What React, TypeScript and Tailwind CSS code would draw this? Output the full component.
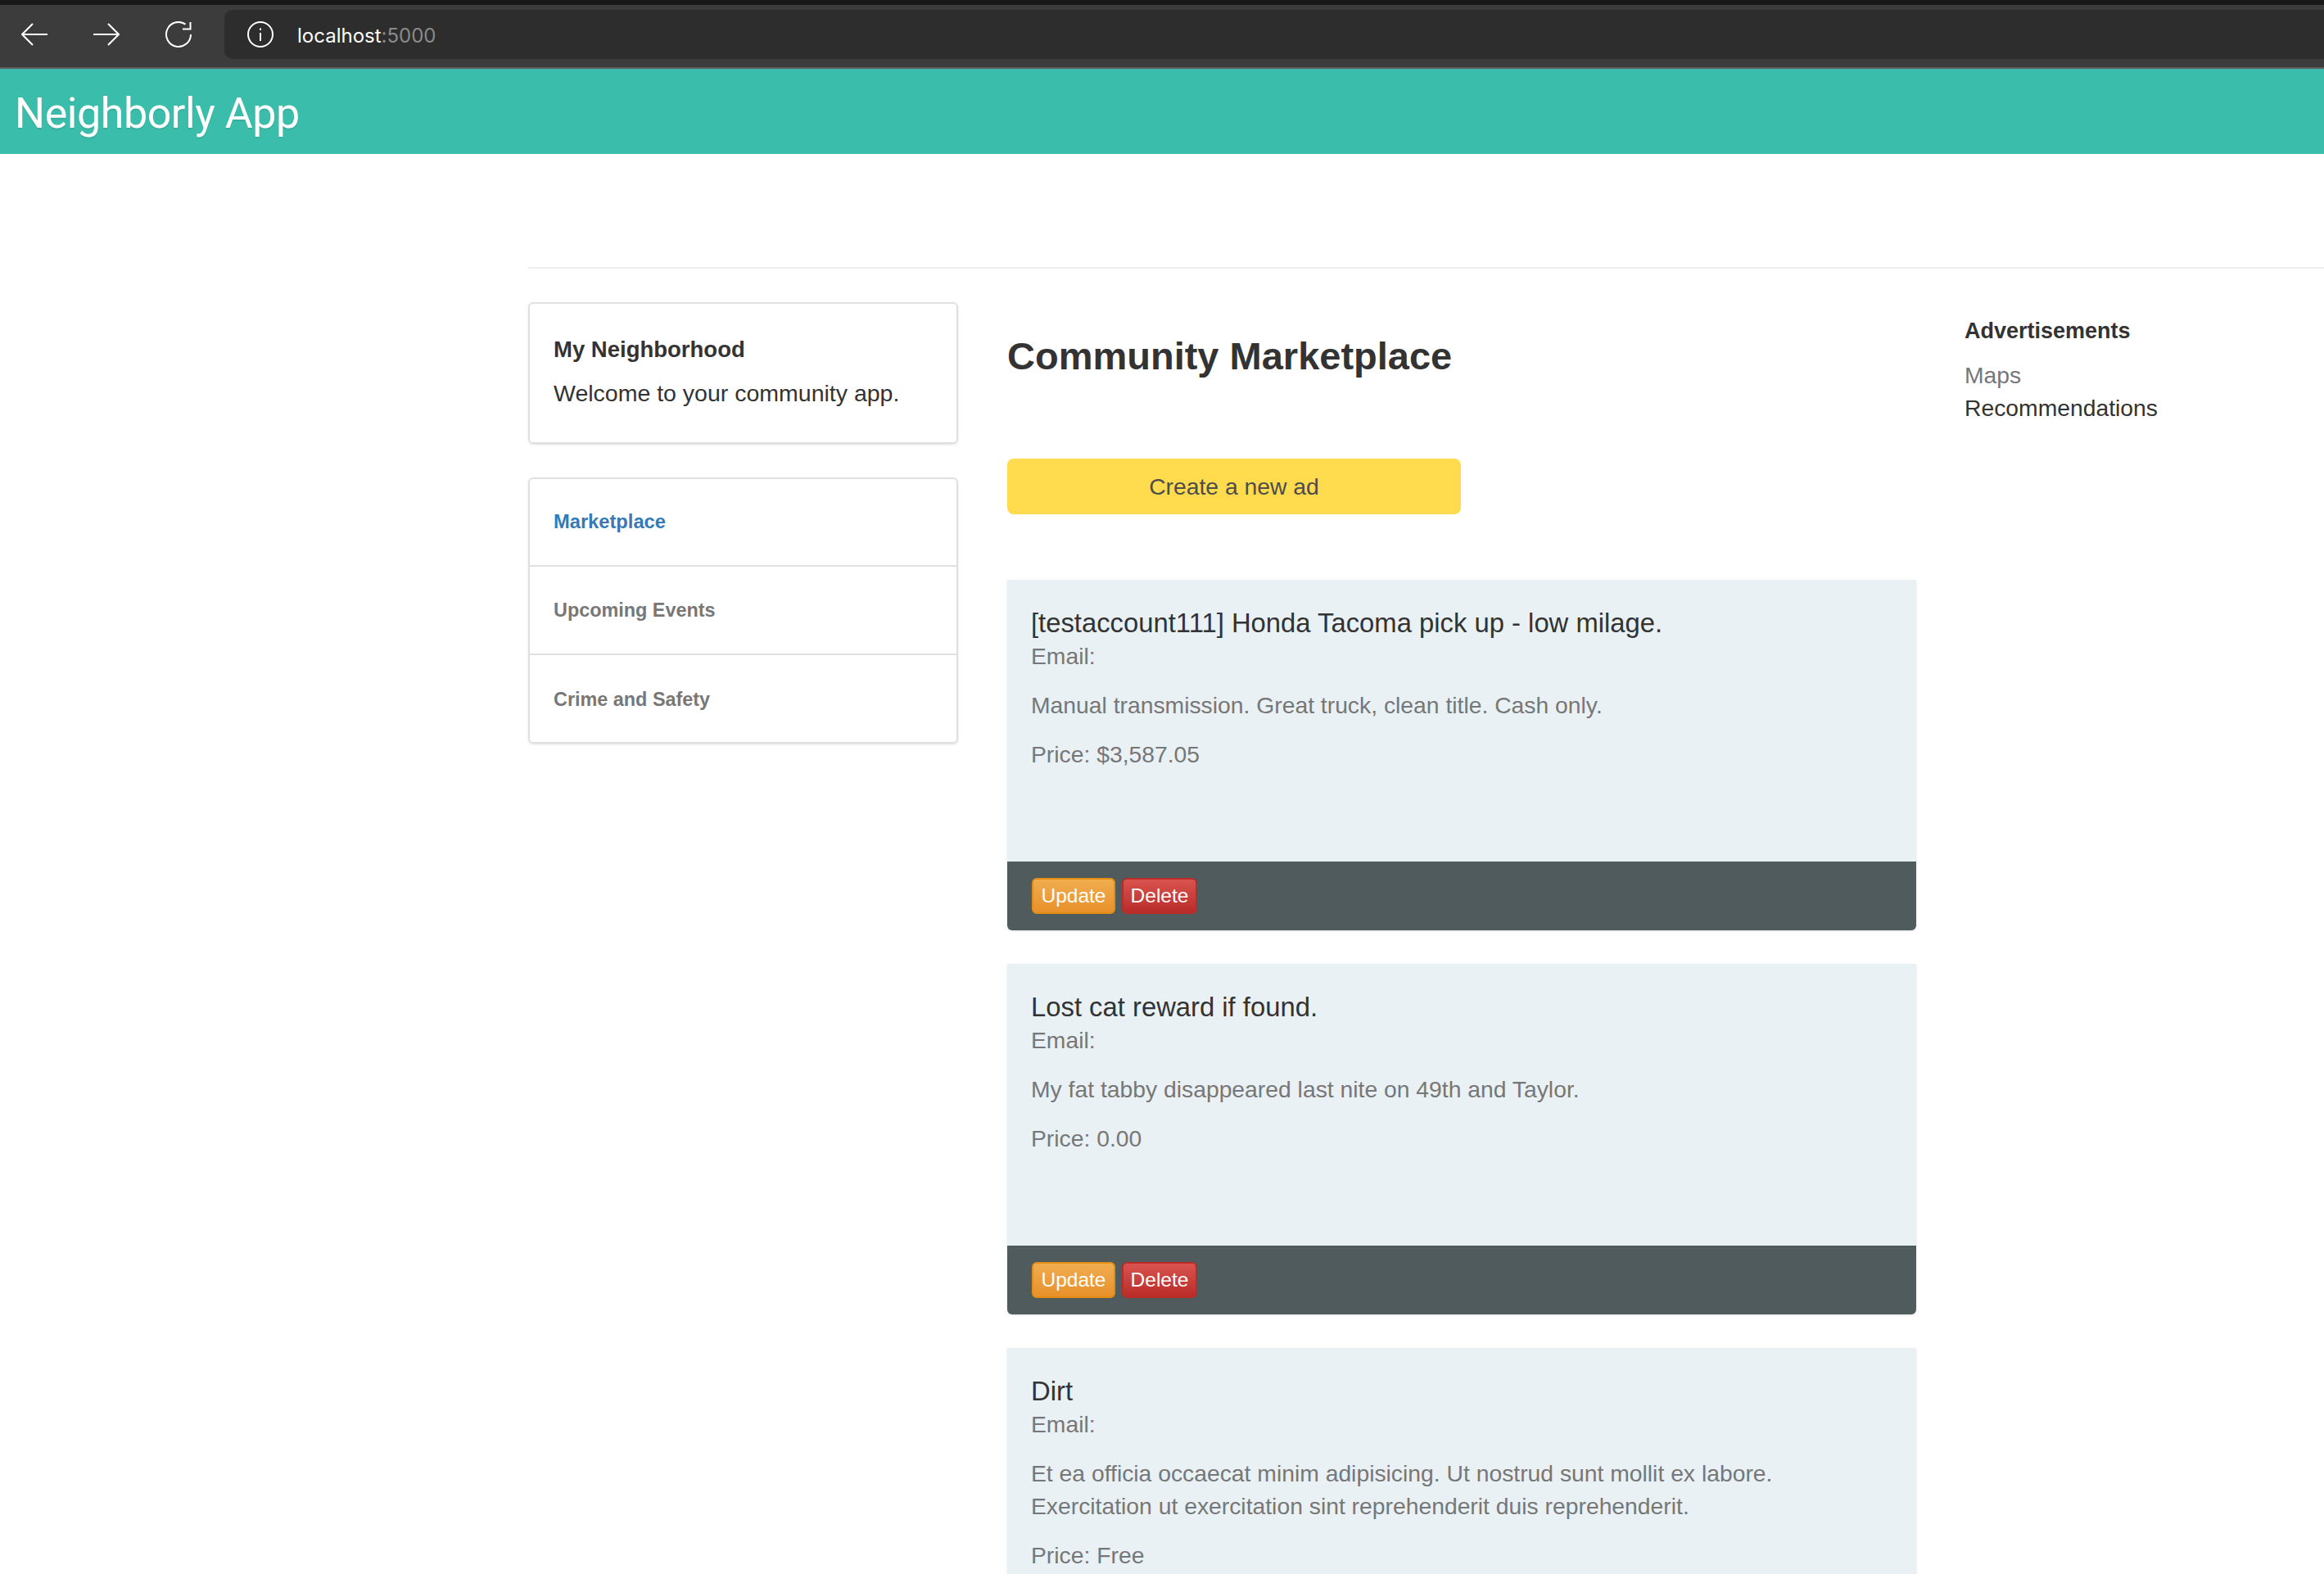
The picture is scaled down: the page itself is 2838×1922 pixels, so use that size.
const sans = "font-['Liberation_Sans',Arial,sans-serif]"

const ads = [
    {
        title: "[testaccount111] Honda Tacoma pick up - low milage.",
        body: "Manual transmission. Great truck, clean title. Cash only.",
        price: "Price: $3,587.05",
    },
    {
        title: "Lost cat reward if found.",
        body: "My fat tabby disappeared last nite on 49th and Taylor.",
        price: "Price: 0.00",
    },
    {
        title: "Dirt",
        body: "Et ea officia occaecat minim adipisicing. Ut nostrud sunt mollit ex labore. Exercitation ut exercitation sint reprehenderit duis reprehenderit.",
        price: "Price: Free",
    },
]

const BrowserBar = () => (
    <div className="h-[84px] bg-[#3c3c3c] border-t-[6px] border-b-2 border-t-[#191919] border-b-[#5e5c5c] flex items-center">
        <svg width="32" height="28" viewBox="0 0 32 28" fill="none" stroke="white" strokeWidth="2" className="ml-[26px] -mt-1">
            <path d="M32 14H1M14 1 1 14l13 13" />
        </svg>
        <svg width="32" height="28" viewBox="0 0 32 28" fill="none" stroke="white" strokeWidth="2" className="ml-[56px] -mt-1">
            <path d="M0 14h31M18 1l13 13-13 13" />
        </svg>
        <svg width="32" height="32" viewBox="0 0 32 32" fill="none" stroke="white" strokeWidth="2" className="ml-[56px] -mt-1">
            <path d="M31 16A15 15 0 1 1 24.500 3.600" />
            <path d="M30.500 1v8.500H21" />
        </svg>
        <div className="ml-10 flex-1 h-[60px] -mt-1 bg-[#2d2d2d] rounded-l-[10px] flex items-center">
            <svg width="32" height="32" viewBox="0 0 32 32" fill="none" stroke="white" strokeWidth="2" className="ml-7">
                <circle cx="16" cy="16" r="15" />
                <path d="M16 14v10M16 8.500v2.500" />
            </svg>
            <span className="ml-[29px] text-[24px] leading-none pt-[3px] text-white font-['Inter',sans-serif]">
                localhost<span className="text-[#8a8a8a]">:5000</span>
            </span>
        </div>
    </div>
)

const AdCard = ({ title, body, price }: { title: string; body: string; price: string }) => (
    <div className="mb-[41px] rounded-b-md shadow-sm overflow-hidden">
        <div className="bg-[#e9f1f5] h-[344px] px-[29px] pt-[33px]">
            <h4 className="text-[32.800px] leading-[40px] text-[#333333]">{title}</h4>
            <p className="text-[28.3px] leading-[40px] text-[#777777]">Email:</p>
            <p className="text-[28.3px] leading-[40px] text-[#777777] mt-[20px]">{body}</p>
            <p className="text-[28.3px] leading-[40px] text-[#777777] mt-[20px]">{price}</p>
        </div>
        <div className="bg-[#4f5b5c] h-[84px] px-[30px] flex items-center gap-2">
            <button className="h-[44px] w-[102px] rounded-md border-2 border-[#e38d13] bg-linear-to-b from-[#f0ad4e] to-[#e8912a] text-[24.500px] text-white">Update</button>
            <button className="h-[44px] w-[92px] rounded-md border-2 border-[#b92c28] bg-linear-to-b from-[#d9534f] to-[#b92c28] text-[24.500px] text-white">Delete</button>
        </div>
    </div>
)

export default function App() {
    return (
        <div className={`h-[1922px] overflow-hidden bg-white ${sans}`}>
            <BrowserBar />
            <div className="h-[104px] bg-[#3abdab] flex items-center pl-[18px]">
                <h1 className="text-[52px] leading-none pt-[5px] tracking-[-0.45px] text-white font-['Roboto',sans-serif] [text-shadow:0_2px_1px_rgba(0,0,0,0.08)]">Neighborly App</h1>
            </div>
            <div className="pl-[644px] pt-[138px]">
                <div className="h-[2px] bg-[#eeeeee]" />
                <div className="flex gap-[60px] pt-[41px] pl-px">
                    <div className="w-[525px] shrink-0">
                        <div className="h-[173px] rounded-md border-2 border-[#e0e0e0] shadow-sm px-[29px] pt-[36px]">
                            <h3 className="text-[27.500px] leading-[40px] font-bold text-[#333333]">My Neighborhood</h3>
                            <p className="text-[28.500px] leading-[40px] text-[#333333] mt-[13px]">Welcome to your community app.</p>
                        </div>
                        <div className="mt-[41px] rounded-md border-2 border-[#e0e0e0] shadow-sm">
                            <div className="h-[107px] border-b-2 border-[#e0e0e0] px-[29px] flex items-center text-[23.700px] font-bold text-[#337ab7]">Marketplace</div>
                            <div className="h-[108px] border-b-2 border-[#e0e0e0] px-[29px] pt-[2px] flex items-center text-[23.400px] font-bold text-[#777777]">Upcoming Events</div>
                            <div className="h-[106px] px-[29px] pt-[3px] flex items-center text-[23.400px] font-bold text-[#777777]">Crime and Safety</div>
                        </div>
                    </div>
                    <div className="w-[1110px] shrink-0">
                        <h2 className="text-[47px] leading-[58px] font-bold text-[#333333] mt-[37px]">Community Marketplace</h2>
                        <button className="mt-[96px] block w-[554px] h-[68px] rounded-lg bg-[#ffdb4d] text-[28.300px] text-[#4d4d4d]">Create a new ad</button>
                        <div className="mt-[80px]">
                            {ads.map((ad) => (
                                <AdCard key={ad.title} {...ad} />
                            ))}
                        </div>
                    </div>
                    <div className="pt-[15px] -ml-px">
                        <h4 className="text-[27px] leading-[40px] font-bold text-[#333333]">Advertisements</h4>
                        <p className="text-[28.300px] leading-[40px] text-[#777777] mt-[14px]">Maps</p>
                        <p className="text-[28.300px] leading-[40px] text-[#333333]">Recommendations</p>
                    </div>
                </div>
            </div>
        </div>
    )
}
